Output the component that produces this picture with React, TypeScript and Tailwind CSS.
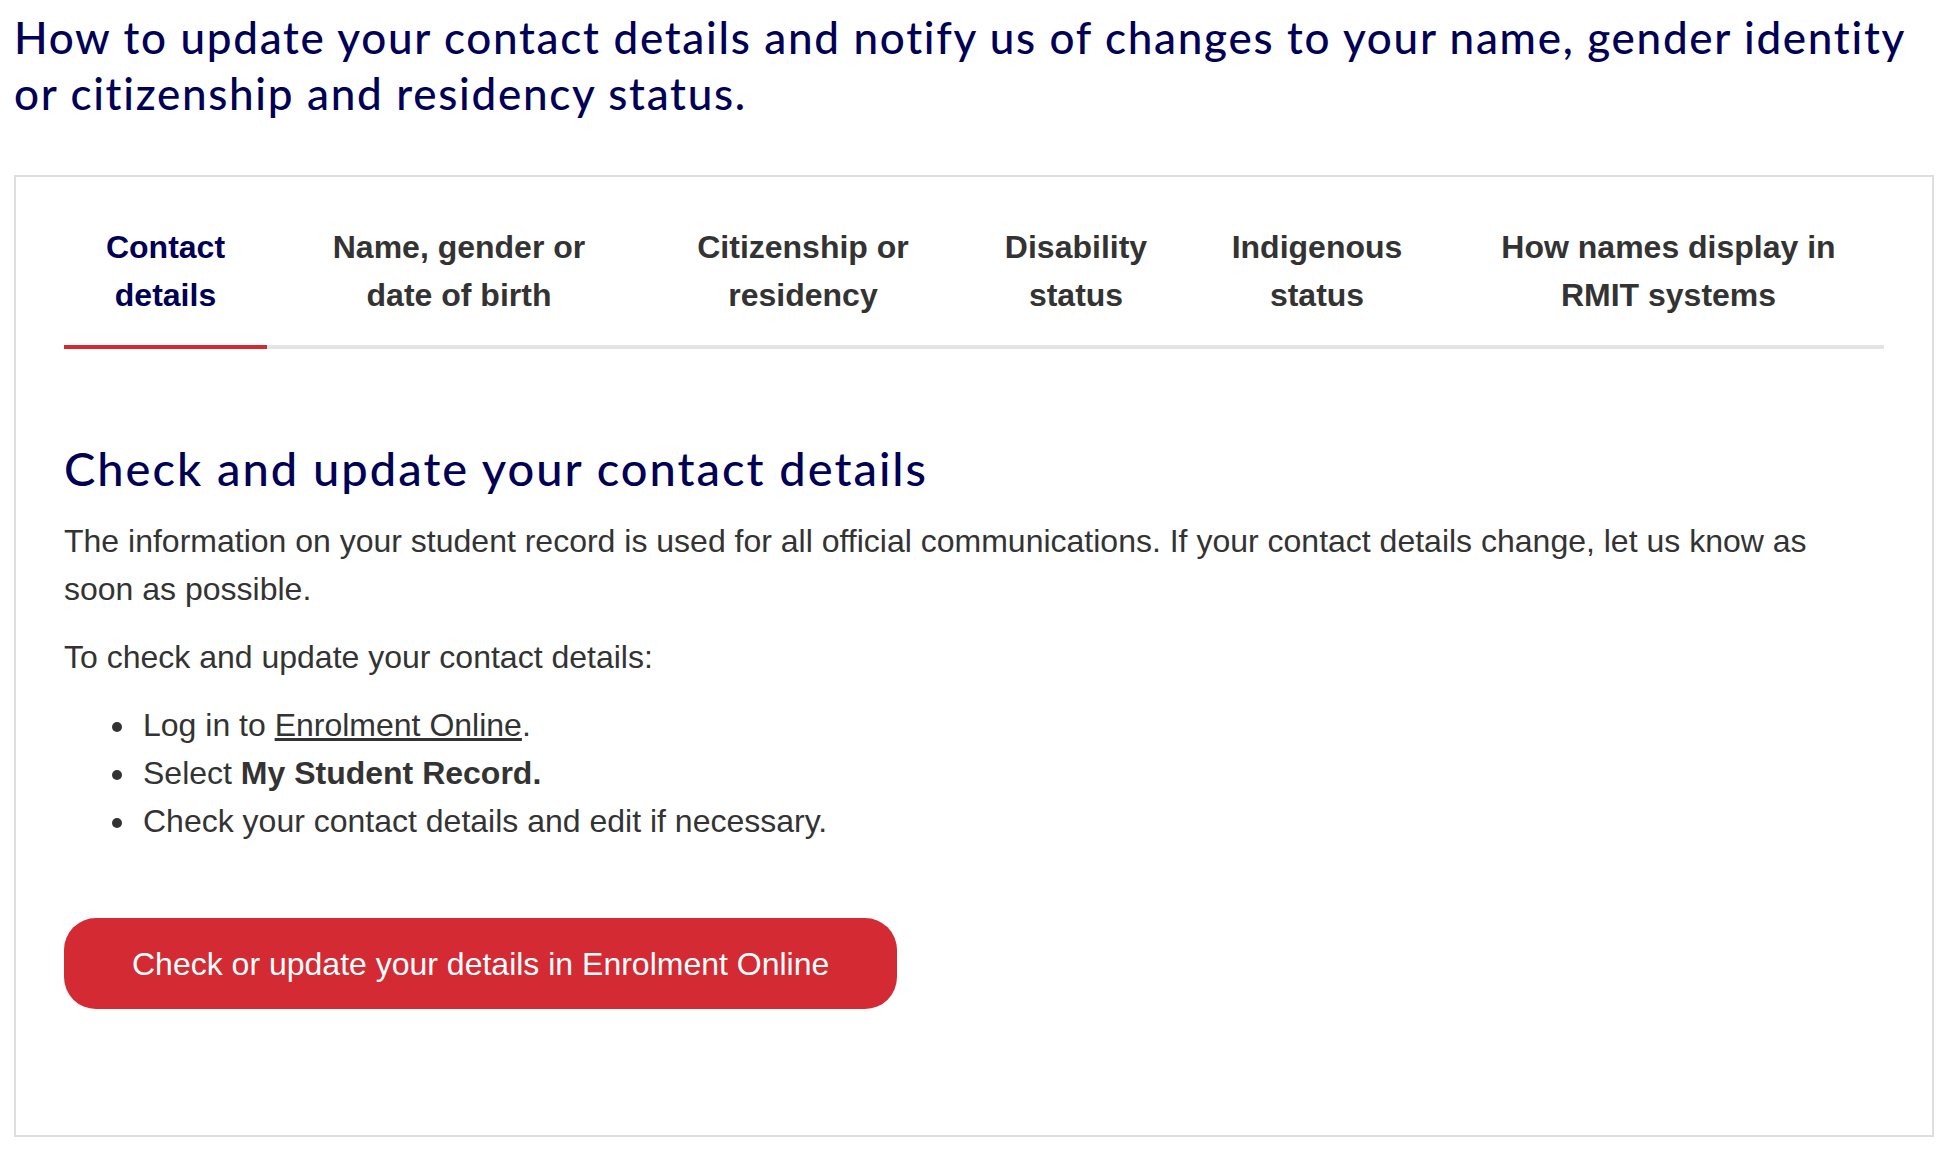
import React from 'react';

const TABS = [
  { lines: ['Contact', 'details'], w: 'w-[203px]', active: true },
  { lines: ['Name, gender or', 'date of birth'], w: 'w-[384px]' },
  { lines: ['Citizenship or', 'residency'], w: 'w-[304px]' },
  { lines: ['Disability', 'status'], w: 'w-[242px]' },
  { lines: ['Indigenous', 'status'], w: 'w-[240px]' },
  { lines: ['How names display in', 'RMIT systems'], w: 'flex-1 pl-[16px]' },
];

export default function App() {
  return (
    <div className="min-h-screen bg-white pl-[14px] pr-[12px] pt-[9px] font-['Liberation_Sans',Arial,sans-serif] text-[#333]">
      <h1 className="font-['Lato',sans-serif] text-[44px] leading-[56px] font-medium tracking-[1.7px] text-[#000054]">
        How to update your contact details and notify us of changes to your name, gender identity or citizenship and residency status.
      </h1>

      <div className="mt-[54px] border-2 border-[#dedede] px-[48px] pt-[46px] pb-[126px]">
        {/* tab list */}
        <div className="flex border-b-4 border-[#e2e4e9]">
          {TABS.map((tab) => (
            <button
              key={tab.lines[0]}
              className={`${tab.w} relative pb-[26px] text-center text-[32px] leading-[48px] font-bold ${
                tab.active ? 'text-[#000054]' : 'text-[#333]'
              }`}
            >
              {tab.lines.map((l) => (
                <span key={l} className="block whitespace-nowrap">{l}</span>
              ))}
              {tab.active && (
                <span className="absolute left-0 right-0 -bottom-[4px] h-[4px] bg-[#d32a33]" />
              )}
            </button>
          ))}
        </div>

        {/* panel */}
        <div className="pt-[89px]">
          <h2 className="font-['Lato',sans-serif] text-[47px] leading-[60px] font-medium tracking-[2px] text-[#000054]">
            Check and update your contact details
          </h2>
          <p className="mt-[19px] text-[32px] leading-[48px]">
            The information on your student record is used for all official communications. If your contact details change, let us know as soon as possible.
          </p>
          <p className="mt-[20px] text-[32px] leading-[48px]">To check and update your contact details:</p>
          <ul className="mt-[20px] list-disc pl-[74px] text-[32px] leading-[48px]">
            <li className="pl-[5px]">
              Log in to <a href="#" className="underline">Enrolment Online</a>.
            </li>
            <li className="pl-[5px]">
              Select <strong className="font-bold">My Student Record.</strong>
            </li>
            <li className="pl-[5px]">Check your contact details and edit if necessary.</li>
          </ul>
          <button className="mt-[73px] flex h-[91px] items-center rounded-[32px] bg-[#d32a33] px-[68px] text-[32px] leading-[48px] text-white">
            Check or update your details in Enrolment Online
          </button>
        </div>
      </div>
    </div>
  );
}
